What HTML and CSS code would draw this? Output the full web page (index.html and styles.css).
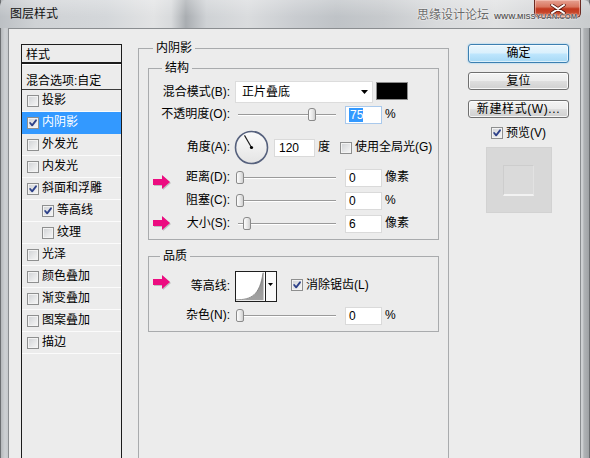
FILE: index.html
```html
<!DOCTYPE html>
<html lang="zh-CN">
<head>
<meta charset="utf-8">
<title>图层样式</title>
<link rel="stylesheet" href="styles.css">
</head>
<body>
<div class="window">
  <div class="titlebar">
    <span class="title">图层样式</span>
    <span class="close-btn">
      <svg width="18" height="10" viewBox="0 0 18 10"><path d="M3 1 L15 9 M15 1 L3 9" stroke="#5a1a10" stroke-width="3.4" stroke-linecap="round"/><path d="M3 1 L15 9 M15 1 L3 9" stroke="#ffffff" stroke-width="2" stroke-linecap="round"/></svg>
    </span>
    <div class="watermark"><span class="wm-cn">思缘设计论坛</span><span class="wm-en">WWW.MISSYUAN.COM</span></div>
  </div>
  <div class="client">
    <div class="stylelist">
      <div class="list-head">样式</div>
      <div class="list-blend">混合选项:自定</div>
      <div class="list-item"><span class="cb"></span><span class="item-text">投影</span></div>
      <div class="list-item selected"><span class="cb"><svg class="check" viewBox="0 0 12 12"><path d="M2.6 6 L5 8.8 L9.6 2.8"/></svg></span><span class="item-text">内阴影</span></div>
      <div class="list-item"><span class="cb"></span><span class="item-text">外发光</span></div>
      <div class="list-item"><span class="cb"></span><span class="item-text">内发光</span></div>
      <div class="list-item"><span class="cb"><svg class="check" viewBox="0 0 12 12"><path d="M2.6 6 L5 8.8 L9.6 2.8"/></svg></span><span class="item-text">斜面和浮雕</span></div>
      <div class="list-item sub"><span class="cb"><svg class="check" viewBox="0 0 12 12"><path d="M2.6 6 L5 8.8 L9.6 2.8"/></svg></span><span class="item-text">等高线</span></div>
      <div class="list-item sub"><span class="cb"></span><span class="item-text">纹理</span></div>
      <div class="list-item"><span class="cb"></span><span class="item-text">光泽</span></div>
      <div class="list-item"><span class="cb"></span><span class="item-text">颜色叠加</span></div>
      <div class="list-item"><span class="cb"></span><span class="item-text">渐变叠加</span></div>
      <div class="list-item"><span class="cb"></span><span class="item-text">图案叠加</span></div>
      <div class="list-item"><span class="cb"></span><span class="item-text">描边</span></div>
    </div>

    <div class="main">
      <fieldset class="group outer">
        <legend class="legend-outer">内阴影</legend>

        <fieldset class="group structure">
          <legend class="legend-structure">结构</legend>

          <div class="row row-blend">
            <span class="lbl">混合模式(B):</span>
            <div class="select"><span>正片叠底</span><svg class="select-arrow" width="7" height="4" viewBox="0 0 7 4"><path d="M0 0 H7 L3.5 4 Z" fill="#000"/></svg></div>
            <span class="swatch"></span>
          </div>

          <div class="row row-opacity">
            <span class="lbl">不透明度(O):</span>
            <div class="slider"><span class="thumb" style="left:73px"></span></div>
            <span class="field focused"><span class="sel-text">75</span></span>
            <span class="unit">%</span>
          </div>

          <div class="row row-angle">
            <span class="lbl">角度(A):</span>
            <svg class="dial" width="35" height="35" viewBox="0 0 35 35">
              <defs>
                <linearGradient id="dialFill" x1="0" y1="0" x2="0" y2="1">
                  <stop offset="0" stop-color="#fbfbfb"/>
                  <stop offset="1" stop-color="#e4e4e4"/>
                </linearGradient>
              </defs>
              <circle cx="17.5" cy="17.5" r="16" fill="url(#dialFill)" stroke="#56617d" stroke-width="1.6"/>
              <line x1="17.5" y1="17.5" x2="10.5" y2="5.4" stroke="#1a1a1a" stroke-width="1.1"/>
              <circle cx="17.5" cy="17.5" r="1.6" fill="#000"/>
            </svg>
            <span class="field field-angle">120</span>
            <span class="unit">度</span>
            <span class="cb cb-global"></span><span class="cb-label">使用全局光(G)</span>
          </div>

          <div class="row row-distance">
            <span class="lbl"><svg class="arrow arrow-low" width="19" height="15" viewBox="0 0 19 15"><polygon points="1,5 10,5 10,1 18,8 10,15 10,11 1,11" fill="#9a9a9a" opacity="0.55"/><polygon points="0,4 9,4 9,0 17,7 9,14 9,10 0,10" fill="#ec0c80"/></svg><span class="lbl-text">距离(D):</span></span>
            <div class="slider"><span class="thumb" style="left:1px"></span></div>
            <span class="field">0</span>
            <span class="unit">像素</span>
          </div>

          <div class="row row-choke">
            <span class="lbl">阻塞(C):</span>
            <div class="slider"><span class="thumb" style="left:1px"></span></div>
            <span class="field">0</span>
            <span class="unit">%</span>
          </div>

          <div class="row row-size">
            <span class="lbl"><svg class="arrow" width="19" height="15" viewBox="0 0 19 15"><polygon points="1,5 10,5 10,1 18,8 10,15 10,11 1,11" fill="#9a9a9a" opacity="0.55"/><polygon points="0,4 9,4 9,0 17,7 9,14 9,10 0,10" fill="#ec0c80"/></svg><span class="lbl-text">大小(S):</span></span>
            <div class="slider"><span class="thumb" style="left:8px"></span></div>
            <span class="field">6</span>
            <span class="unit">像素</span>
          </div>
        </fieldset>

        <fieldset class="group quality">
          <legend class="legend-quality">品质</legend>

          <div class="row row-contour">
            <span class="lbl"><svg class="arrow arrow-high" width="19" height="15" viewBox="0 0 19 15"><polygon points="1,5 10,5 10,1 18,8 10,15 10,11 1,11" fill="#9a9a9a" opacity="0.55"/><polygon points="0,4 9,4 9,0 17,7 9,14 9,10 0,10" fill="#ec0c80"/></svg><span class="lbl-text">等高线:</span></span>
            <div class="contour">
              <svg class="contour-curve" width="29" height="29" viewBox="0 0 29 29">
                <defs>
                  <linearGradient id="curveFill" x1="0" y1="0" x2="0" y2="1">
                    <stop offset="0" stop-color="#8e8e8e"/>
                    <stop offset="1" stop-color="#a2a2a2"/>
                  </linearGradient>
                </defs>
                <path d="M0 29 C 16 29 25 24 28.5 0 L29 0 L29 29 Z" fill="url(#curveFill)"/>
                <path d="M0 28.5 C 16 28.5 25 24 28.5 0" fill="none" stroke="#6f6f6f" stroke-width="0.8"/>
              </svg>
              <span class="contour-drop"><svg width="5" height="3" viewBox="0 0 5 3"><path d="M0 0 H5 L2.5 3 Z" fill="#000"/></svg></span>
            </div>
            <span class="cb cb-anti"><svg class="check" viewBox="0 0 12 12"><path d="M2.6 6 L5 8.8 L9.6 2.8"/></svg></span><span class="cb-label">消除锯齿(L)</span>
          </div>

          <div class="row row-noise">
            <span class="lbl">杂色(N):</span>
            <div class="slider"><span class="thumb" style="left:1px"></span></div>
            <span class="field">0</span>
            <span class="unit">%</span>
          </div>
        </fieldset>
      </fieldset>
    </div>

    <div class="side">
      <div class="btn btn-default">确定</div>
      <div class="btn btn-reset">复位</div>
      <div class="btn btn-new">新建样式(W)...</div>
      <div class="preview-check"><span class="cb"><svg class="check" viewBox="0 0 12 12"><path d="M2.6 6 L5 8.8 L9.6 2.8"/></svg></span><span class="cb-label">预览(V)</span></div>
      <div class="preview-box"><div class="preview-inner"></div></div>
    </div>
  </div>
</div>
</body>
</html>
```

FILE: styles.css
```css
html, body {
  margin: 0;
  padding: 0;
  width: 590px;
  height: 458px;
  overflow: hidden;
}

body {
  font-family: "Liberation Sans", "Noto Sans CJK SC", sans-serif;
  font-size: 12px;
  color: #000;
  background: #c4c7ca;
}

.window {
  width: 590px;
  height: 480px;
  display: flex;
  flex-direction: column;
  background: linear-gradient(90deg, #6c6f72 0, #6c6f72 1px, #b5b8bb 1px, #cdd0d3 5px, #c6c9cc 8px, #c6c9cc 581px, #d6d8da 582px, #b0b3b6 584px, #9fa2a5 589px, #6c6f72 589px);
}

/* ---------- title bar ---------- */
.titlebar {
  position: relative;
  height: 28px;
  flex: none;
  display: flex;
  align-items: flex-start;
  padding: 0 9px 0 10px;
  border-radius: 6px 6px 0 0;
  background:
    linear-gradient(180deg, rgba(255,255,255,0.25) 0, rgba(255,255,255,0) 60%),
    linear-gradient(90deg, #bcc0c4 0, #cfd2d5 6%, #d4d7da 18%, #e2e3e4 26%, #d8dadc 29%, #a9adb1 31.5%, #cfd2d5 35%, #dadcde 42%, #c9ccd0 50%, #bfc3c7 57%, #c7cacd 65%, #d8dadc 74%, #e0e1e2 84%, #d4d6d8 92%, #c9ccce 100%);
}

.title {
  line-height: 28px;
  font-size: 12px;
  color: #111;
}

.close-btn {
  margin-left: auto;
  width: 47px;
  height: 18px;
  box-sizing: border-box;
  border: 1px solid #6b2a22;
  border-top: none;
  border-radius: 0 0 5px 5px;
  background: linear-gradient(180deg, #e6a192 0, #d9765f 40%, #c2381f 52%, #c94a2c 80%, #e0815f 100%);
  box-shadow: inset 0 0 0 1px rgba(255,220,210,0.45);
  display: flex;
  align-items: center;
  justify-content: center;
  padding-top: 1px;
}

.watermark {
  position: absolute;
  right: 13px;
  top: 6px;
  display: flex;
  align-items: baseline;
  gap: 5px;
  color: #6a6a6a;
  text-shadow: 0 0 2px #fff, 0 0 1px #fff;
}

.wm-cn {
  font-size: 12px;
  line-height: 18px;
}

.wm-en {
  font-size: 7.6px;
  font-weight: bold;
  font-family: "Liberation Sans", sans-serif;
  color: #5e5e5e;
}

/* ---------- client area ---------- */
.client {
  flex: 1;
  margin: 0 9px 0 8px;
  border: 1px solid #8a8d90;
  border-bottom: none;
  background: #ececec;
  display: flex;
  align-items: flex-start;
  padding: 11px 0 0 12px;
}

/* ---------- style list ---------- */
.stylelist {
  width: 101px;
  height: 440px;
  box-sizing: border-box;
  margin-top: 4px;
  border: 1px solid #1c1c1c;
  background: #ececec;
  flex: none;
}

.list-head {
  height: 19px;
  box-sizing: border-box;
  padding: 2px 0 0 4px;
  line-height: 17px;
  border-bottom: 2px solid #1c1c1c;
}

.list-blend {
  height: 26px;
  box-sizing: border-box;
  padding: 8px 0 0 4px;
  line-height: 17px;
  border-top: 1px solid #ffffff;
  border-bottom: 1px solid #3a3a3a;
}

.list-item {
  height: 22px;
  box-sizing: border-box;
  display: flex;
  align-items: center;
  padding-left: 5px;
  border-bottom: 1px solid #fbfbfb;
  line-height: 17px;
}

.list-item.sub {
  padding-left: 20px;
}

.list-item.selected {
  background: #3399ff;
  color: #fff;
  border-bottom-color: #3399ff;
}

.item-text {
  margin-left: 3px;
}

/* ---------- checkbox ---------- */
.cb {
  width: 12px;
  height: 12px;
  box-sizing: border-box;
  flex: none;
  border: 1px solid #8e8f8f;
  background: linear-gradient(135deg, #cfd1d4 0, #e6e7e8 55%, #f7f7f7 100%);
  box-shadow: inset 0 0 0 1px #f3f3f3;
  display: flex;
  align-items: center;
  justify-content: center;
}

.check {
  width: 10px;
  height: 10px;
  display: block;
}

.check path {
  fill: none;
  stroke: #2e4189;
  stroke-width: 2.2;
  stroke-linecap: round;
  stroke-linejoin: round;
}

.cb-label {
  margin-left: 3px;
  line-height: 17px;
}

/* ---------- main column ---------- */
.main {
  width: 311px;
  margin-left: 16px;
  flex: none;
}

.group {
  margin: 0;
  min-width: 0;
  border: 1px solid #a9abad;
}

.group legend {
  padding: 0 3px;
  line-height: 16px;
  font-size: 12px;
}

.outer {
  height: 440px;
  box-sizing: border-box;
  padding: 4px 9px 0 9px;
}

.legend-outer {
  margin-left: 5px;
}

.structure {
  padding: 5px 0 6px 0;
}

.legend-structure {
  margin-left: 13px;
}

.quality {
  margin-top: 8px;
  padding: 7px 0 6px 0;
}

.legend-quality {
  margin-left: 11px;
}

.row {
  display: flex;
  align-items: center;
  height: 19px;
}

.row-blend { height: 22px; }
.row-opacity { margin-top: 2px; }
.row-angle { margin-top: 6px; height: 35px; }
.row-distance { margin-top: 3px; }
.row-choke { margin-top: 4px; }
.row-size { margin-top: 4px; }
.row-contour { height: 31px; }
.row-noise { margin-top: 4px; }

.lbl {
  width: 81px;
  margin-right: 5px;
  flex: none;
  display: flex;
  align-items: center;
  justify-content: flex-end;
  line-height: 17px;
  white-space: nowrap;
}

.arrow {
  margin-left: 4px;
  margin-right: auto;
  flex: none;
}

.arrow-low { transform: translateY(5px); }
.arrow-high { transform: translateY(-4px); }

/* select */
.select {
  width: 138px;
  height: 22px;
  box-sizing: border-box;
  background: #fff;
  border: 1px solid #dcdcdc;
  display: flex;
  align-items: center;
  padding-left: 6px;
  line-height: 17px;
}

.select-arrow {
  margin-left: auto;
  margin-right: 4px;
}

.swatch {
  width: 32px;
  height: 18px;
  box-sizing: border-box;
  margin-left: 3px;
  margin-top: -2px;
  background: #000;
  border: 1px solid #8c8c8c;
}

/* slider */
.slider {
  position: relative;
  width: 103px;
  height: 19px;
  flex: none;
  background:
    linear-gradient(180deg, transparent 9px, #9a9a9a 9px, #9a9a9a 10px, #ffffff 10px, #ffffff 11px, transparent 11px) 3px 0 / 98px 19px no-repeat;
}

.thumb {
  position: absolute;
  top: 3px;
  width: 8px;
  height: 13px;
  box-sizing: border-box;
  border: 1px solid #8a8a8a;
  border-radius: 3px 3px 2px 2px;
  background: linear-gradient(90deg, #fdfdfd 0, #e6e6e6 60%, #cfcfcf 100%);
}

/* fields */
.field {
  width: 37px;
  height: 18px;
  box-sizing: border-box;
  margin-left: 7px;
  flex: none;
  background: #fff;
  border: 1px solid #dadada;
  line-height: 16px;
  padding-left: 3px;
}

.field.focused {
  border-color: #a9c9ec;
}

.sel-text {
  background: #3399ff;
  color: #fff;
  display: inline-block;
  line-height: 14px;
  padding: 0 0 0 1px;
}

.unit {
  margin-left: 3px;
  line-height: 17px;
}

/* angle */
.dial {
  margin-left: -1px;
  flex: none;
}

.field-angle {
  width: 41px;
  margin-left: 5px;
  padding-left: 4px;
}

.cb-global {
  margin-left: 10px;
}

/* contour */
.contour {
  width: 42px;
  height: 31px;
  box-sizing: border-box;
  border: 1px solid #1e1e1e;
  background: #fff;
  display: flex;
  flex: none;
}

.contour-curve {
  display: block;
}

.contour-drop {
  width: 11px;
  border-left: 1px solid #1e1e1e;
  margin-left: 1px;
  display: flex;
  align-items: center;
  justify-content: center;
  padding-bottom: 4px;
  background: #fafafa;
}

.cb-anti {
  margin-left: 14px;
  margin-top: -3px;
}

.row-contour .cb-label {
  margin-top: -3px;
}

/* ---------- side column ---------- */
.side {
  width: 101px;
  margin-left: 19px;
  margin-top: 4px;
  flex: none;
  display: flex;
  flex-direction: column;
  align-items: center;
}

.btn {
  width: 101px;
  height: 18px;
  box-sizing: border-box;
  border: 1px solid #707070;
  border-radius: 3px;
  background: linear-gradient(180deg, #f4f4f4 0, #ececec 48%, #dedede 52%, #d0d0d0 100%);
  box-shadow: inset 0 0 0 1px rgba(255,255,255,0.8);
  text-align: center;
  line-height: 16px;
  font-size: 12px;
}

.btn-default {
  height: 19px;
  line-height: 17px;
  border-color: #3c7fb1;
  background: linear-gradient(180deg, #eaf6fd 0, #d9f0fc 48%, #bee6fd 52%, #a7d9f5 100%);
  box-shadow: inset 0 0 0 1px rgba(255,255,255,0.6), 0 0 2px #7cc4f0;
}

.btn-reset {
  margin-top: 9px;
}

.btn-new {
  margin-top: 10px;
  letter-spacing: 0.6px;
}

.preview-check {
  margin-top: 8px;
  display: flex;
  align-items: center;
  height: 14px;
}

.preview-box {
  margin-top: 7px;
  width: 66px;
  height: 66px;
  box-sizing: border-box;
  background: #d8d8d8;
  border: 1px solid #d2d2d2;
  display: flex;
  align-items: center;
  justify-content: center;
}

.preview-inner {
  width: 31px;
  height: 31px;
  box-sizing: border-box;
  background: #dadada;
  border: 1px solid #cdcdcd;
  border-bottom: 2px solid #f2f2f2;
  border-right-color: #e2e2e2;
}
```
